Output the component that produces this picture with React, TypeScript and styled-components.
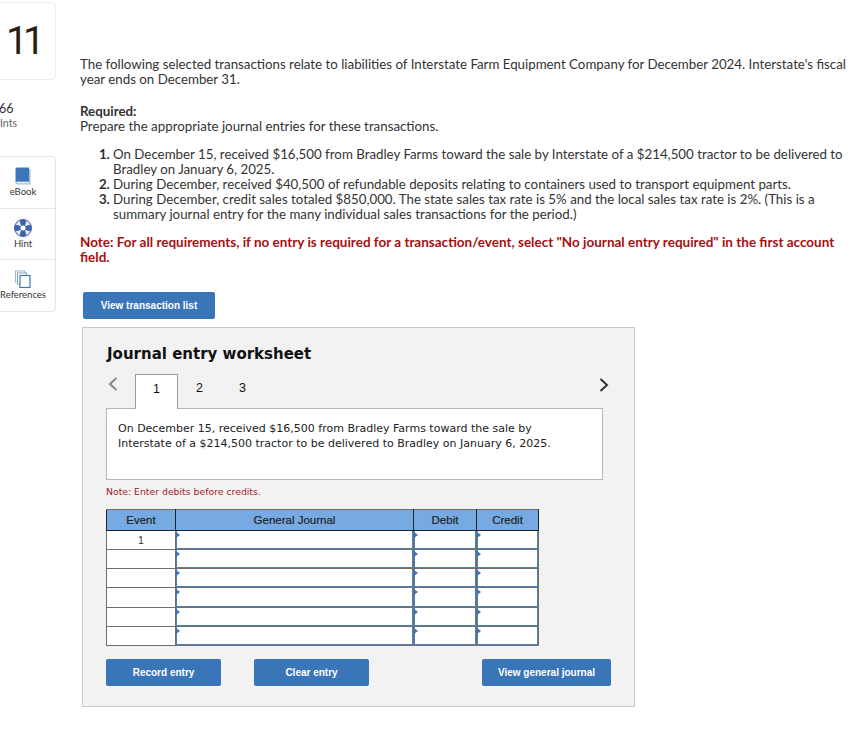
import React from 'react';
import styled, { createGlobalStyle } from 'styled-components';

const rows = ['1', '', '', '', '', ''];

const tools = [
  { label: 'eBook', icon: <BookIcon /> },
  { label: 'Hint', icon: <HintIcon /> },
  { label: 'References', icon: <RefsIcon /> },
];

function BookIcon() {
  return (
    <svg width="18" height="18" viewBox="0 0 18 18">
      <path d="M15 2h1.500v15.500H3.500A2 2 0 0 1 1.500 15.500" fill="#a9c0dc" />
      <path d="M3 .5h12v14H3.300A2 2 0 0 0 1.500 15.500V2A1.500 1.500 0 0 1 3 .5z" fill="#3b76b8" />
      <path d="M3 15.200h12v1H3z" fill="#fff" />
    </svg>
  );
}

function HintIcon() {
  return (
    <svg width="18" height="18" viewBox="0 0 18 18">
      <circle cx="9" cy="9" r="8.500" fill="#e9ecf6" stroke="#4a5aa8" strokeWidth="1" />
      <path d="M5.500 1.500a8.300 8.300 0 0 1 7 0L11 6.500H7zM5.500 16.500a8.300 8.300 0 0 0 7 0L11 11.500H7zM1.500 5.500a8.300 8.300 0 0 0 0 7L6.500 11V7zM16.500 5.500a8.300 8.300 0 0 1 0 7L11.500 11V7z" fill="#3f62ae" />
      <circle cx="9" cy="9" r="3" fill="#fff" stroke="#3f62ae" strokeWidth="0.800" />
    </svg>
  );
}

function RefsIcon() {
  return (
    <svg width="18" height="18" viewBox="0 0 18 18" fill="#fff" stroke="#3b76b8">
      <rect x="1.500" y="1" width="9" height="11" stroke="#9db9d8" />
      <rect x="3.500" y="3" width="9" height="11" stroke="#7fa5cf" />
      <rect x="6" y="5.500" width="10" height="12" strokeWidth="1.200" />
    </svg>
  );
}

export default function App() {
  return (
    <Page>
      <GlobalStyle />
      <Sidebar>
        <NumberCard>11</NumberCard>
        <Score>
          <ScoreValue>66</ScoreValue>
          <ScoreLabel>Ints</ScoreLabel>
        </Score>
        <ToolCard>
          {tools.map((tool) => (
            <Tool key={tool.label}>
              {tool.icon}
              <span>{tool.label}</span>
            </Tool>
          ))}
        </ToolCard>
      </Sidebar>
      <Main>
        <Para>
          The following selected transactions relate to liabilities of Interstate Farm Equipment Company for December
          2024. Interstate's fiscal year ends on December 31.
        </Para>
        <Required>
          <strong>Required:</strong>
          <br />
          Prepare the appropriate journal entries for these transactions.
        </Required>
        <Steps>
          <li>
            On December 15, received $16,500 from Bradley Farms toward the sale by Interstate of a $214,500 tractor to
            be delivered to Bradley on January 6, 2025.
          </li>
          <li>During December, received $40,500 of refundable deposits relating to containers used to transport equipment parts.</li>
          <li>
            During December, credit sales totaled $850,000. The state sales tax rate is 5% and the local sales tax rate
            is 2%. (This is a summary journal entry for the many individual sales transactions for the period.)
          </li>
        </Steps>
        <RedNote>
          Note: For all requirements, if no entry is required for a transaction/event, select "No journal entry
          required" in the first account field.
        </RedNote>
        <ListButton>View transaction list</ListButton>
        <Worksheet>
          <Title>Journal entry worksheet</Title>
          <TabRow>
            <Chevron width="12" height="16" viewBox="0 0 12 16">
              <path d="M9.500 2L3 8l6.500 6" fill="none" stroke="#8a8a8a" strokeWidth="2.200" />
            </Chevron>
            <Tab $active>1</Tab>
            <Tab>2</Tab>
            <Tab>3</Tab>
            <NextChevron width="12" height="16" viewBox="0 0 12 16">
              <path d="M2.500 2L9 8l-6.500 6" fill="none" stroke="#333" strokeWidth="2" />
            </NextChevron>
          </TabRow>
          <Prompt>
            On December 15, received $16,500 from Bradley Farms toward the sale by
            <br />
            Interstate of a $214,500 tractor to be delivered to Bradley on January 6, 2025.
          </Prompt>
          <DebitNote>Note: Enter debits before credits.</DebitNote>
          <Grid>
            <thead>
              <tr>
                <HeadCell $width={69}>Event</HeadCell>
                <HeadCell $width={238}>General Journal</HeadCell>
                <HeadCell $width={63}>Debit</HeadCell>
                <HeadCell $width={62}>Credit</HeadCell>
              </tr>
            </thead>
            <tbody>
              {rows.map((event, i) => (
                <Row key={i} $tall={i === 3}>
                  <EventCell>{event}</EventCell>
                  <InputCell />
                  <InputCell />
                  <InputCell />
                </Row>
              ))}
            </tbody>
          </Grid>
          <Actions>
            <ActionButton $width={115}>Record entry</ActionButton>
            <ActionButton $width={115} $left={33}>Clear entry</ActionButton>
            <ActionButton $width={129} $left={113}>View general journal</ActionButton>
          </Actions>
        </Worksheet>
      </Main>
    </Page>
  );
}

const GlobalStyle = createGlobalStyle`
  html, body {
    margin: 0;
    padding: 0;
    background: #fff;
    overflow: hidden;
  }
`;

const Page = styled.div`
  display: flex;
  width: 867px;
  height: 732px;
  overflow: hidden;
  font-family: Lato, "Liberation Sans", sans-serif;
  color: #333;
`;

const Sidebar = styled.aside`
  width: 57px;
  flex: none;
  margin-right: 23px;
  padding-top: 2px;
`;

const NumberCard = styled.div`
  width: 66px;
  height: 78px;
  margin-left: -10px;
  box-sizing: border-box;
  border: 1px solid #ececec;
  border-radius: 4px;
  display: flex;
  align-items: center;
  justify-content: center;
  font-family: Roboto, sans-serif;
  font-size: 39px;
  letter-spacing: -5px;
  line-height: 1;
  color: #2a1d14;
`;

const Score = styled.div`
  margin-top: 21px;
  height: 55px;
`;

const ScoreValue = styled.div`
  font-size: 12.500px;
  line-height: 15px;
  margin-top: 2px;
  margin-left: -1px;
`;

const ScoreLabel = styled.div`
  font-size: 10.500px;
  line-height: 15px;
  color: #666;
`;

const ToolCard = styled.div`
  width: 66px;
  height: 156px;
  margin-left: -10px;
  box-sizing: border-box;
  border: 1px solid #e6e6e6;
  border-radius: 4px;
  display: flex;
  flex-direction: column;
`;

const Tool = styled.div`
  flex: 1;
  display: flex;
  flex-direction: column;
  align-items: center;
  padding-top: 10px;
  font-size: 9.500px;
  line-height: 12px;
  color: #333;
  white-space: nowrap;
  gap: 1px;

  & + & {
    border-top: 1px solid #e6e6e6;
  }
`;

const Main = styled.main`
  flex: 1;
  min-width: 0;
  padding-top: 57px;
  font-size: 13.300px;
  line-height: 15px;
`;

const Para = styled.p`
  margin: 0;
  width: 770px;
`;

const Required = styled.p`
  margin: 17px 0 0;

  strong {
    font-weight: 700;
  }
`;

const Steps = styled.ol`
  margin: 13px 0 0;
  padding: 0 0 0 33px;
  width: 735px;

  li::marker {
    font-weight: 700;
  }
`;

const RedNote = styled.p`
  margin: 13px 0 0;
  color: #a80f0f;
  font-weight: 700;
  font-size: 13.500px;
  width: 765px;
`;

const ListButton = styled.button`
  display: block;
  margin: 27px 0 0 3px;
  width: 132px;
  height: 27px;
  border: 0;
  border-radius: 2px;
  background: #3a75b8;
  color: #fff;
  font: 700 10px "Liberation Sans", sans-serif;
`;

const Worksheet = styled.section`
  margin: 8px 0 0 2px;
  width: 553px;
  height: 380px;
  box-sizing: border-box;
  border: 1px solid #c8c8c8;
  background: #f2f2f2;
  padding: 0 23px;
`;

const Title = styled.h2`
  margin: 16px 0 0;
  padding-left: 1px;
  font: 700 15px/20px "DejaVu Sans", sans-serif;
  color: #111;
`;

const TabRow = styled.div`
  position: relative;
  display: flex;
  align-items: flex-end;
  height: 35px;
  margin-top: 9px;
  padding-left: 29px;
`;

const Chevron = styled.svg`
  position: absolute;
  left: 1px;
  top: 3px;
`;

const NextChevron = styled.svg`
  position: absolute;
  right: 1px;
  top: 4px;
`;

const Tab = styled.div<{ $active?: boolean }>`
  width: 43px;
  height: 35px;
  box-sizing: border-box;
  display: flex;
  align-items: center;
  justify-content: center;
  padding-bottom: 6px;
  font: 12.500px "Liberation Sans", sans-serif;
  color: #111;
  position: relative;
  background: ${({ $active }) => ($active ? '#fff' : 'transparent')};
  border: ${({ $active }) => ($active ? '1px solid #9a9a9a' : '0')};
  border-bottom: 0;
  margin-bottom: ${({ $active }) => ($active ? '-1px' : '0')};
`;

const Prompt = styled.div`
  width: 497px;
  height: 72px;
  box-sizing: border-box;
  background: #fff;
  border: 1px solid #b5b5b5;
  padding: 12px 11px 10px;
  font: 11px/15px "DejaVu Sans", sans-serif;
  color: #222;
`;

const DebitNote = styled.div`
  margin-top: 4px;
  height: 16px;
  font: 9.300px/16px "DejaVu Sans", sans-serif;
  color: #a5242a;
`;

const Grid = styled.table`
  margin-top: 9px;
  border-collapse: collapse;
  table-layout: fixed;
  width: 433px;
  background: #fff;
  font: 11.500px "Liberation Sans", sans-serif;
  border: 1px solid #6f6f6f;
`;

const HeadCell = styled.th<{ $width: number }>`
  width: ${({ $width }) => $width}px;
  height: 21px;
  padding: 0;
  background: #77aae3;
  border: 1px solid #222;
  border-top-color: #6f6f6f;
  font-weight: 400;
  color: #222;
  box-sizing: border-box;
  -webkit-text-stroke: 0.200px #222;
`;

const Row = styled.tr<{ $tall?: boolean }>`
  height: ${({ $tall }) => ($tall ? 20 : 19)}px;
`;

const EventCell = styled.td`
  padding: 0;
  border: 1px solid #6f6f6f;
  text-align: center;
  color: #333;
  font-size: 10.500px;
  box-sizing: border-box;
`;

const InputCell = styled.td`
  position: relative;
  padding: 0;
  box-sizing: border-box;
  border: 1px solid #6f6f6f;
  box-shadow: inset 1px 0 #4f81b8, inset -1px 0 #4f81b8, inset 0 -1px #4f81b8;

  &::before {
    content: '';
    position: absolute;
    top: 1px;
    left: 0;
    border-left: 4px solid #3a75b8;
    border-top: 3px solid transparent;
    border-bottom: 3px solid transparent;
  }
`;

const Actions = styled.div`
  display: flex;
  margin-top: 13px;
`;

const ActionButton = styled.button<{ $width: number; $left?: number }>`
  width: ${({ $width }) => $width}px;
  height: 27px;
  margin-left: ${({ $left }) => $left ?? 0}px;
  border: 0;
  border-radius: 2px;
  background: #3a75b8;
  color: #fff;
  font: 700 10px "Liberation Sans", sans-serif;
`;
